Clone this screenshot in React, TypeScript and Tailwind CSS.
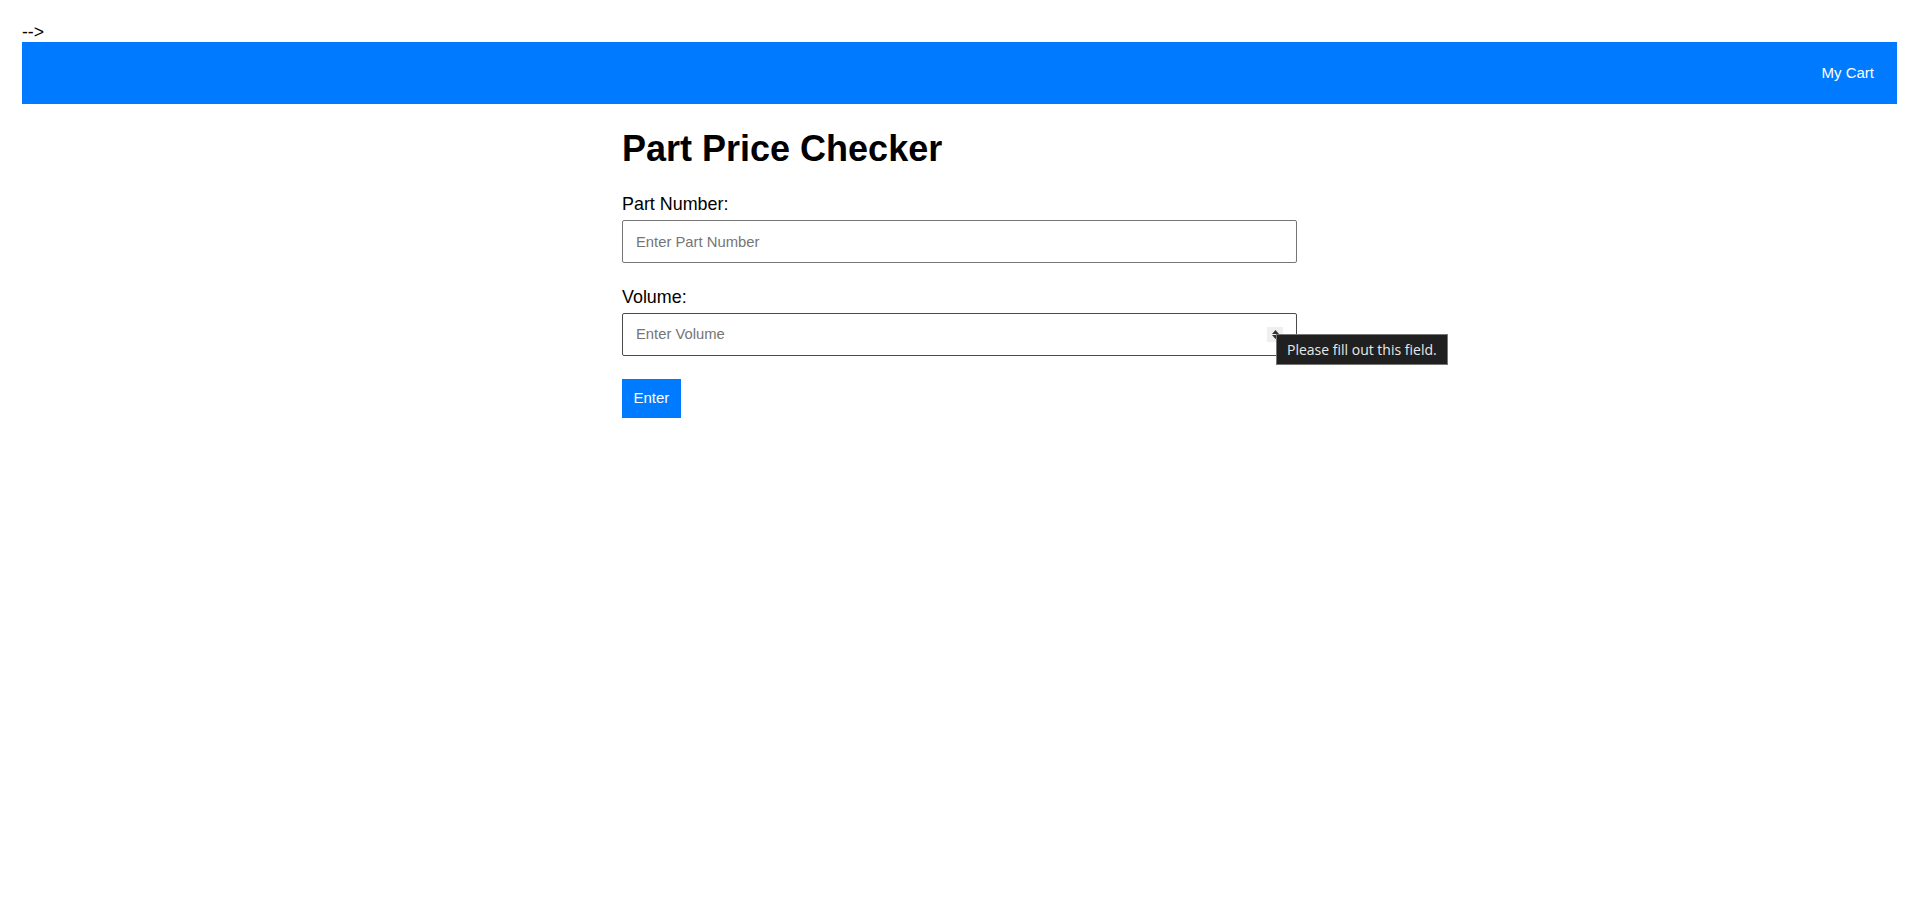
import React from "react";

export default function App() {
  return (
    <div
      className="min-h-screen bg-white pl-[22px] pr-[21px] pt-[22px] text-black"
      style={{ fontFamily: '"Liberation Sans", Arial, sans-serif' }}
    >
      <div className="text-[17.6px] leading-[20px]">--&gt;</div>
      <header className="flex h-[62px] items-center justify-end bg-[#007bff] pr-[23px]">
        <a className="text-[15px] leading-[18px] text-white" href="#">
          My Cart
        </a>
      </header>
      <main className="mx-auto w-[675px]">
        <h1 className="mt-[25px] text-[36px] font-bold leading-[40px]">Part Price Checker</h1>
        <form className="mt-[25px]" onSubmit={(e) => e.preventDefault()}>
          <div className="mb-[23.5px]">
            <label className="block text-[17.9px] leading-[20px]">Part Number:</label>
            <input
              type="text"
              placeholder="Enter Part Number"
              className="mt-[6px] box-border block h-[43px] w-full rounded-[2px] border border-[#767676] px-[13px] text-[14.8px] outline-none placeholder:text-[#757575]"
            />
          </div>
          <div className="mb-[23px]">
            <label className="block text-[17.9px] leading-[20px]">Volume:</label>
            <div className="relative mt-[6px]">
              <input
                type="text"
                placeholder="Enter Volume"
                className="box-border block h-[43px] w-full rounded-[2px] border border-[#4a4a4a] px-[13px] text-[14.8px] outline-none placeholder:text-[#757575]"
              />
              <div className="absolute right-[14px] top-[14px] flex h-[15px] w-[16px] flex-col items-center justify-center gap-[1px] bg-[#efefef]">
                <svg width="7" height="4" viewBox="0 0 7 4">
                  <path d="M0 4 L3.5 0 L7 4 Z" fill="#333" />
                </svg>
                <svg width="7" height="4" viewBox="0 0 7 4">
                  <path d="M0 0 L3.5 4 L7 0 Z" fill="#333" />
                </svg>
              </div>
              <div
                className="absolute left-[654px] top-[21px] z-10 flex h-[31px] items-center whitespace-nowrap border border-[#767676] bg-[#202020] pl-[10px] pr-[10px] text-[14px] text-[#e8e8e8]"
                style={{ fontFamily: '"Open Sans", "Noto Sans", sans-serif' }}
              >
                Please fill out this field.
              </div>
            </div>
          </div>
          <button
            type="submit"
            className="h-[39px] bg-[#007bff] px-[11.5px] text-[15px] text-white"
          >
            Enter
          </button>
        </form>
      </main>
    </div>
  );
}
